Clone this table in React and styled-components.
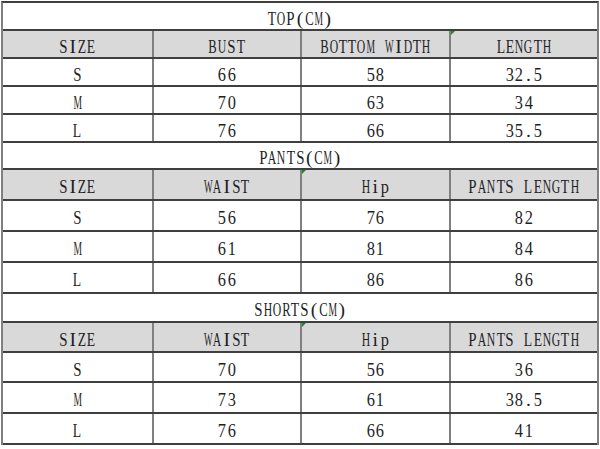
import React, { useLayoutEffect, useRef, useState } from "react";
import styled, { createGlobalStyle, css } from "styled-components";

const GlobalStyle = createGlobalStyle`
  html, body {
    margin: 0;
    padding: 0;
    background: #ffffff;
  }
  body {
    font-family: "Liberation Serif", "DejaVu Serif", serif;
    color: #1e1e26;
  }
`;

const Sheet = styled.div`
  width: 598px;
  margin: 1px 0 0 1px;
  box-sizing: border-box;
  border-top: 2px solid #3f3f3f;
  border-left: 2px solid #808080;
  border-right: 2px solid #808080;
`;

const TitleRow = styled.div`
  height: ${(p) => p.$h}px;
  box-sizing: border-box;
  border-bottom: 2px solid #3f3f3f;
  display: flex;
  align-items: center;
  justify-content: center;
  padding-top: 5px;
  background: #ffffff;
`;

const Row = styled.div`
  display: grid;
  grid-template-columns: repeat(4, 1fr);
  height: ${(p) => p.$h}px;
  box-sizing: border-box;
  border-bottom: 2px solid #3f3f3f;
  background: ${(p) => (p.$head ? "#d9d9d9" : "#ffffff")};
`;

const Cell = styled.div`
  position: relative;
  display: flex;
  align-items: center;
  justify-content: center;
  padding-top: 5px;
  box-sizing: border-box;
  min-width: 0;
  & + & {
    border-left: 2px solid #808080;
  }
  ${(p) =>
    p.$flag &&
    css`
      &::before {
        content: "";
        position: absolute;
        left: 0;
        top: 0;
        border-top: 4px solid #1f8a2a;
        border-right: 4px solid transparent;
      }
    `}
`;

const Text = styled.span`
  display: inline-flex;
  font-size: 19.5px;
  line-height: 1;
  white-space: pre;
  color: #1e1e26;
`;

/* one half-width cell of the monospaced font the original uses */
const Slot = styled.span`
  display: inline-flex;
  justify-content: center;
  width: 9.25px;
  overflow: visible;
`;

const Glyph = styled.span`
  display: inline-block;
  flex: none;
  transform-origin: center;
`;

function Char({ ch }) {
  const ref = useRef(null);
  const [scale, setScale] = useState(1);
  useLayoutEffect(() => {
    const el = ref.current;
    if (!el) return;
    const w = el.offsetWidth;
    if (w > 0) setScale(Math.min(1, 8.4 / w));
  }, [ch]);
  return (
    <Slot>
      <Glyph ref={ref} style={{ transform: `scaleX(${scale})` }}>
        {ch}
      </Glyph>
    </Slot>
  );
}

function Label({ children }) {
  const chars = Array.from(String(children));
  return (
    <Text>
      {chars.map((c, i) => (
        <Char key={i} ch={c === " " ? "\u00a0" : c} />
      ))}
    </Text>
  );
}

const sections = [
  {
    title: "TOP(CM)",
    titleH: 28,
    headH: 28,
    rowH: [28, 28, 28],
    flag: 3,
    head: ["SIZE", "BUST", "BOTTOM WIDTH", "LENGTH"],
    rows: [
      ["S", "66", "58", "32.5"],
      ["M", "70", "63", "34"],
      ["L", "76", "66", "35.5"],
    ],
  },
  {
    title: "PANTS(CM)",
    titleH: 27,
    headH: 31,
    rowH: [31, 31, 31],
    flag: 2,
    head: ["SIZE", "WAIST", "Hip", "PANTS LENGTH"],
    rows: [
      ["S", "56", "76", "82"],
      ["M", "61", "81", "84"],
      ["L", "66", "86", "86"],
    ],
  },
  {
    title: "SHORTS(CM)",
    titleH: 29,
    headH: 30,
    rowH: [30, 31, 31],
    flag: 2,
    head: ["SIZE", "WAIST", "Hip", "PANTS LENGTH"],
    rows: [
      ["S", "70", "56", "36"],
      ["M", "73", "61", "38.5"],
      ["L", "76", "66", "41"],
    ],
  },
];

export default function App() {
  return (
    <>
      <GlobalStyle />
      <Sheet>
        {sections.map((s) => (
          <React.Fragment key={s.title}>
            <TitleRow $h={s.titleH}>
              <Label>{s.title}</Label>
            </TitleRow>
            <Row $h={s.headH} $head>
              {s.head.map((h, i) => (
                <Cell key={h} $flag={i === s.flag}>
                  <Label>{h}</Label>
                </Cell>
              ))}
            </Row>
            {s.rows.map((r, ri) => (
              <Row key={ri} $h={s.rowH[ri]}>
                {r.map((v, i) => (
                  <Cell key={i}>
                    <Label>{v}</Label>
                  </Cell>
                ))}
              </Row>
            ))}
          </React.Fragment>
        ))}
      </Sheet>
    </>
  );
}
